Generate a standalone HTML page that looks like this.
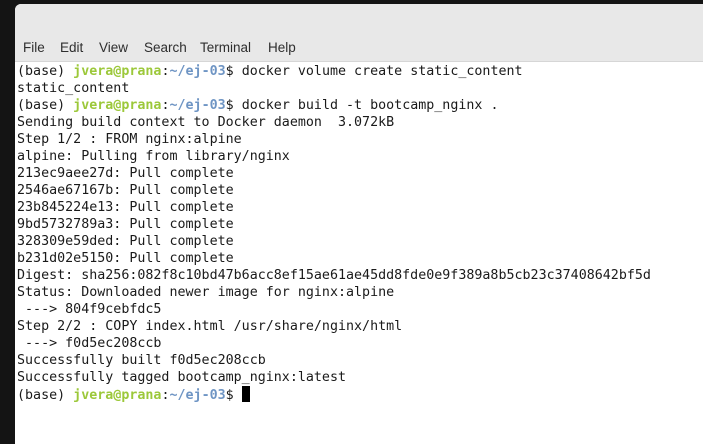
<!DOCTYPE html>
<html><head><style>
html,body{margin:0;padding:0;width:703px;height:429px;overflow:hidden;background:#141414;}
.win{position:absolute;left:15px;top:4px;width:700px;height:440px;background:#fff;border-radius:6px 0 0 0;overflow:hidden;}
.title{position:absolute;left:0;top:0;right:0;height:57px;background:#e8e8e8;border-bottom:1px solid #d6d6d6;}
.menu span{position:absolute;top:36px;font:13.5px "Liberation Sans","DejaVu Sans",sans-serif;color:#2e2e2e;}
pre{position:absolute;left:2px;top:59px;margin:0;font:13.33px/17px "DejaVu Sans Mono","Liberation Mono",monospace;color:#1a1a1a;}
.g{color:#9cc83a;font-weight:bold;}
.b{color:#6f95c4;font-weight:bold;}
.cur{display:inline-block;width:8px;height:16px;background:#000;vertical-align:-3px;}
</style></head><body>
<div class="win">
<div class="title"><div class="menu"><span style="left:8px">File</span><span style="left:45px">Edit</span><span style="left:84px">View</span><span style="left:129px">Search</span><span style="left:185px">Terminal</span><span style="left:253px">Help</span></div></div>
<pre>(base) <span class="g">jvera@prana</span>:<span class="b">~/ej-03</span>$ docker volume create static_content
static_content
(base) <span class="g">jvera@prana</span>:<span class="b">~/ej-03</span>$ docker build -t bootcamp_nginx .
Sending build context to Docker daemon  3.072kB
Step 1/2 : FROM nginx:alpine
alpine: Pulling from library/nginx
213ec9aee27d: Pull complete
2546ae67167b: Pull complete
23b845224e13: Pull complete
9bd5732789a3: Pull complete
328309e59ded: Pull complete
b231d02e5150: Pull complete
Digest: sha256:082f8c10bd47b6acc8ef15ae61ae45dd8fde0e9f389a8b5cb23c37408642bf5d
Status: Downloaded newer image for nginx:alpine
 ---&gt; 804f9cebfdc5
Step 2/2 : COPY index.html /usr/share/nginx/html
 ---&gt; f0d5ec208ccb
Successfully built f0d5ec208ccb
Successfully tagged bootcamp_nginx:latest
(base) <span class="g">jvera@prana</span>:<span class="b">~/ej-03</span>$ <span class="cur"></span></pre>
</div>
</body></html>
